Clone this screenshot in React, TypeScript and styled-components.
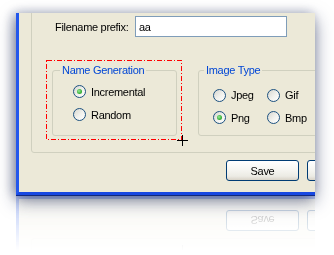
import React from "react";
import styled, { createGlobalStyle } from "styled-components";

const GlobalStyle = createGlobalStyle`
  html, body {
    margin: 0;
    padding: 0;
    background: #ffffff;
  }
  body {
    width: 334px;
    height: 255px;
    overflow: hidden;
    font-family: "Liberation Sans", Arial, sans-serif;
    font-size: 11px;
    letter-spacing: -0.3px;
    color: #000000;
  }
`;

const Stage = styled.div`
  padding: 13px 0 0 16px;
`;

const Window = styled.div`
  box-sizing: border-box;
  width: 299px;
  height: 182px;
  background: #ece9d8;
  border-left: 3px solid #2357ec;
  border-bottom: 3px solid #1848e2;
  overflow: hidden;
  box-shadow: 0 6px 16px rgba(30, 42, 85, 0.55), -3px 0 10px rgba(30, 42, 85, 0.3),
    0 1px 0 #0b2a9e;
  -webkit-box-reflect: below 1px
    linear-gradient(to bottom, transparent 70%, rgba(0, 0, 0, 0.3));
`;

const Frame = styled.div`
  box-sizing: border-box;
  margin: -8px 0 0 12px;
  width: 320px;
  height: 148px;
  border: 1px solid #d0d0bf;
  border-radius: 3px;
  padding: 10px 0 0 0;
`;

const PrefixRow = styled.div`
  display: flex;
  align-items: center;
  height: 21px;
  padding-left: 23px;
`;

const FieldLabel = styled.label`
  width: 80px;
  flex-shrink: 0;
`;

const TextBox = styled.input`
  box-sizing: border-box;
  width: 152px;
  height: 21px;
  margin: 0;
  padding: 0 3px;
  border: 1px solid #7f9db9;
  background: #ffffff;
  font: inherit;
  letter-spacing: inherit;
  color: #000000;
  outline: none;
`;

const GroupsRow = styled.div`
  display: flex;
  align-items: flex-start;
  margin-top: 23px;
  padding-left: 14px;
`;

const Selected = styled.div`
  position: relative;
  padding: 4px 5px 4px 6px;
  flex-shrink: 0;
`;

const SelectionOutline = styled.svg`
  position: absolute;
  left: 0;
  top: 0;
  width: 136px;
  height: 80px;
  overflow: visible;
  pointer-events: none;
`;

const Crosshair = styled.span`
  position: absolute;
  right: -6px;
  bottom: -6px;
  width: 11px;
  height: 11px;

  &::before,
  &::after {
    content: "";
    position: absolute;
    background: #000000;
  }
  &::before {
    left: 0;
    top: 5px;
    width: 11px;
    height: 1px;
  }
  &::after {
    left: 5px;
    top: 0;
    width: 1px;
    height: 11px;
  }
`;

const Group = styled.fieldset<{ $width: number; $offset?: number }>`
  box-sizing: border-box;
  width: ${(p) => p.$width}px;
  height: 72px;
  margin: ${(p) => (p.$offset ? `4px 0 0 ${p.$offset}px` : "0")};
  padding: 0;
  min-width: 0;
  flex-shrink: 0;
  border: 1px solid #d0d0bf;
  border-radius: 3px;
`;

const Legend = styled.legend<{ $indent: number }>`
  margin-left: ${(p) => p.$indent}px;
  padding: 0 2px;
  line-height: 13px;
  color: #0046d5;
`;

const RadioColumn = styled.div`
  display: grid;
  grid-auto-rows: 23px;
  padding: 3px 0 0 20px;
`;

const RadioGrid = styled.div`
  display: grid;
  grid-template-columns: 54px 54px;
  grid-auto-rows: 22.5px;
  padding: 7px 0 0 14px;
`;

const Option = styled.label`
  display: flex;
  align-items: center;
  gap: 5px;
  white-space: nowrap;
`;

const RadioDot = styled.span<{ $checked: boolean }>`
  position: relative;
  box-sizing: border-box;
  width: 13px;
  height: 13px;
  flex-shrink: 0;
  border: 1px solid #1c5180;
  border-radius: 50%;
  background: linear-gradient(135deg, #d6d6cf 0%, #f2f2ee 55%, #ffffff 100%);

  &::after {
    content: "";
    display: ${(p) => (p.$checked ? "block" : "none")};
    position: absolute;
    left: 3px;
    top: 3px;
    width: 5px;
    height: 5px;
    border-radius: 50%;
    background: radial-gradient(circle at 40% 40%, #9ceb9c 0%, #3cb43c 55%, #1f961f 100%);
  }
`;

const ButtonBar = styled.div`
  display: flex;
  gap: 8px;
  margin-top: 7px;
  padding-left: 207px;
`;

const Button = styled.button`
  box-sizing: border-box;
  width: 73px;
  height: 21px;
  flex-shrink: 0;
  margin: 0;
  padding: 0;
  border: 1px solid #003c74;
  border-radius: 3px;
  background: linear-gradient(
    180deg,
    #ffffff 0%,
    #f6f6f2 45%,
    #ecebe4 80%,
    #d8d3c8 100%
  );
  font: inherit;
  letter-spacing: inherit;
  color: #000000;
`;

const Radio: React.FC<{ label: string; checked?: boolean }> = ({
  label,
  checked = false,
}) => (
  <Option>
    <RadioDot $checked={checked} />
    {label}
  </Option>
);

export default function App() {
  return (
    <>
      <GlobalStyle />
      <Stage>
        <Window>
          <Frame>
            <PrefixRow>
              <FieldLabel>Filename prefix:</FieldLabel>
              <TextBox defaultValue="aa" readOnly />
            </PrefixRow>
            <GroupsRow>
              <Selected>
                <Group $width={125}>
                  <Legend $indent={7}>Name Generation</Legend>
                  <RadioColumn>
                    <Radio label="Incremental" checked />
                    <Radio label="Random" />
                  </RadioColumn>
                </Group>
                <SelectionOutline viewBox="0 0 136 80">
                  <rect
                    x="0.5"
                    y="0.5"
                    width="135"
                    height="79"
                    fill="none"
                    stroke="#ff0000"
                    strokeWidth="1"
                    strokeDasharray="5 2 1 2"
                    shapeRendering="crispEdges"
                  />
                </SelectionOutline>
                <Crosshair />
              </Selected>
              <Group $width={130} $offset={16}>
                <Legend $indent={5}>Image Type</Legend>
                <RadioGrid>
                  <Radio label="Jpeg" />
                  <Radio label="Gif" />
                  <Radio label="Png" checked />
                  <Radio label="Bmp" />
                </RadioGrid>
              </Group>
            </GroupsRow>
          </Frame>
          <ButtonBar>
            <Button>Save</Button>
            <Button aria-label="Cancel" />
          </ButtonBar>
        </Window>
      </Stage>
    </>
  );
}
